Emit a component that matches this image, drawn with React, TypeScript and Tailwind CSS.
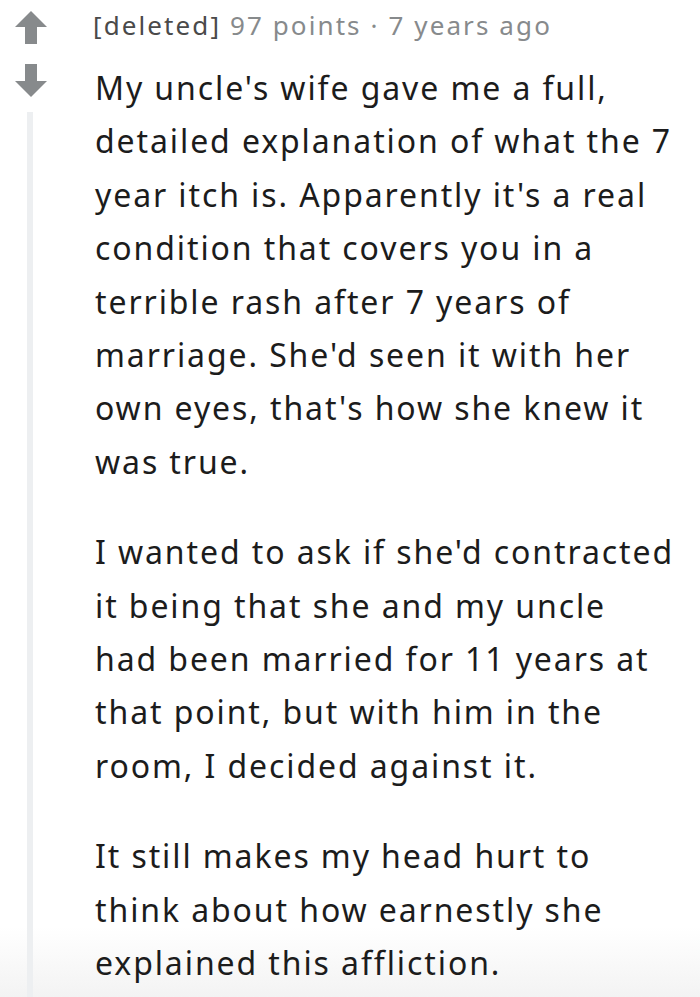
import React from "react";

const Up = () => (
  <svg width="34" height="36" viewBox="0 0 34 36">
    <path d="M17 1 L33 17 L23 17 L23 34 L11 34 L11 17 L1 17 Z" fill="#878a8c" />
  </svg>
);
const Down = () => (
  <svg width="34" height="36" viewBox="0 0 34 36">
    <path d="M17 35 L33 19 L23 19 L23 2 L11 2 L11 19 L1 19 Z" fill="#878a8c" />
  </svg>
);

const paragraphs: string[][] = [
  [
    "My uncle's wife gave me a full,",
    "detailed explanation of what the 7",
    "year itch is. Apparently it's a real",
    "condition that covers you in a",
    "terrible rash after 7 years of",
    "marriage. She'd seen it with her",
    "own eyes, that's how she knew it",
    "was true.",
  ],
  [
    "I wanted to ask if she'd contracted",
    "it being that she and my uncle",
    "had been married for 11 years at",
    "that point, but with him in the",
    "room, I decided against it.",
  ],
  [
    "It still makes my head hurt to",
    "think about how earnestly she",
    "explained this affliction.",
  ],
];

export default function App() {
  return (
    <div
      className="relative w-[700px] h-[997px] overflow-hidden bg-white"
      style={{ fontFamily: '"Noto Sans", "Open Sans", sans-serif' }}
    >
      <div className="absolute bottom-0 left-0 right-0 h-[70px] bg-gradient-to-b from-white to-[#f3f3f3]" />
      <div className="relative flex h-full">
        <div className="w-[93px] shrink-0 flex flex-col items-start pl-[14px] pt-[10px]">
          <Up />
          <div className="mt-[16px]">
            <Down />
          </div>
          <div className="mt-[14px] ml-[13px] w-[6px] flex-1 bg-[#edeff1]" />
        </div>
        <div className="w-[600px] shrink-0 pt-[6px]">
          <div className="text-[26px] leading-[38px] tracking-[2.1px] text-[#878a8c] whitespace-nowrap">
            <span className="text-[#4a4a4a]">[deleted]</span> 97 points · 7 years ago
          </div>
          <div className="mt-[17px] pl-[2px] text-[32px] leading-[53.4px] tracking-[1.9px] text-[#1c1c1c] flex flex-col gap-[37px]">
            {paragraphs.map((lines, i) => (
              <p key={i}>
                {lines.map((l, j) => (
                  <span key={j} className="block whitespace-nowrap">
                    {l}
                  </span>
                ))}
              </p>
            ))}
          </div>
        </div>
      </div>
    </div>
  );
}
